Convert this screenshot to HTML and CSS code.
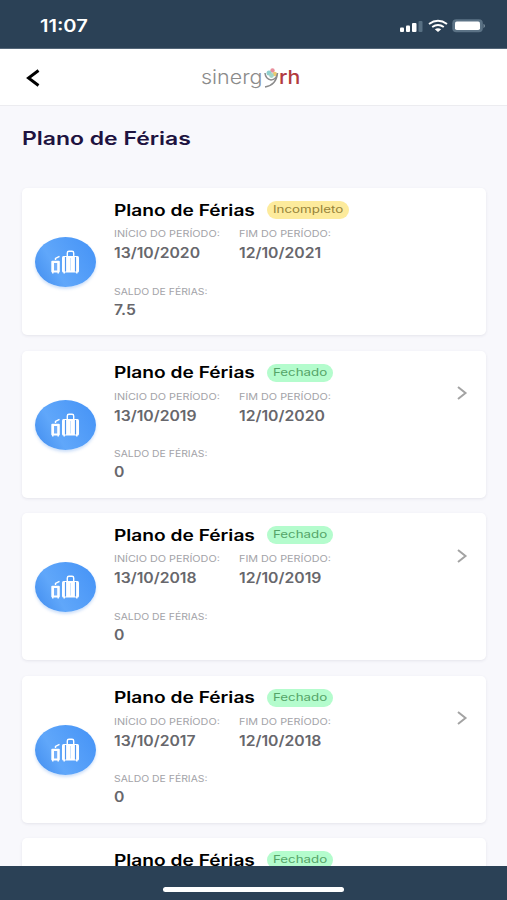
FILE: index.html
```
<!DOCTYPE html>
<html lang="pt-BR">
<head>
<meta charset="utf-8">
<meta name="viewport" content="width=device-width">
<title>Plano de Férias</title>
<link rel="stylesheet" href="styles.css">
</head>
<body>
<svg class="defs" aria-hidden="true">
  <symbol id="bags" viewBox="0 0 30 26">
    <rect x="1.300" y="11.800" width="8.500" height="11.700" rx="1" fill="#fff"/>
    <path d="M4 14h3.200v7.500H4z" fill="#75b0fa"/>
    <path d="M5.500 11V9.500L9.500 7.300" stroke="#fff" stroke-width="1.400" fill="none"/>
    <path d="M17.300 7V4Q17.300 2.300 19 2.300h3Q23.700 2.300 23.700 4V7" stroke="#fff" stroke-width="1.400" fill="none"/>
    <rect x="12" y="7" width="17" height="16.500" rx="1.500" fill="#fff"/>
    <path d="M15.500 8v14.500M25.500 8v14.500" stroke="#5298f3" stroke-width="1.200"/>
    <path d="M20.500 9v12.500" stroke="#b8d8ff" stroke-width=".7"/>
    <path d="M2.800 23v1.600M8.200 23v1.600M14.200 23v1.600M26.800 23v1.600" stroke="#fff" stroke-width="1.500"/>
  </symbol>
  <symbol id="next" viewBox="0 0 12 16"><path d="M2 2 9.500 8 2 14" fill="none" stroke="#a3a3a3" stroke-width="2"/></symbol>
</svg>
<div class="app">
  <div class="status">
    <span class="time"><span class="wide">11:07</span></span>
    <div class="signals">
      <svg width="24" height="14" viewBox="0 0 24 14"><g fill="#fff"><rect y="8.500" width="4" height="4.500" rx="1"/><rect x="6" y="6.500" width="4" height="6.500" rx="1"/><rect x="12" y="4" width="4.500" height="9" rx="1"/></g><rect x="18.500" y="2" width="4" height="11" rx="1" fill="#587083"/></svg>
      <svg width="20" height="14" viewBox="0 0 20 14"><g fill="none" stroke="#fff" stroke-width="2"><path d="M1 5Q10-1.500 19 5"/><path d="M4.200 8Q10 4 15.800 8"/></g><path d="M6.800 10.300Q10 8.200 13.200 10.300L10 13z" fill="#fff"/></svg>
      <svg width="34" height="14" viewBox="0 0 34 14"><rect x=".3" y=".3" width="30.500" height="13" rx="4" fill="#5c7386"/><rect x="3" y="2.600" width="25" height="8.400" rx="1.800" fill="#fff"/><path d="M31.500 4.800q3 2.200 0 4.400z" fill="#7d909f"/></svg>
    </div>
  </div>
  <header class="header">
    <svg class="back" width="14" height="18" viewBox="0 0 14 18"><path d="M12.500 1.500 2.500 9l10 7.500" fill="none" stroke="#000" stroke-width="2.900"/></svg>
    <div class="logo">
      <span class="logo-name"><span class="wide">sinerg</span></span>
      <svg class="logo-y" width="15" height="22" viewBox="0 0 15 22"><circle cx="8.500" cy="3.500" r="2.200" fill="#e98f9c"/><circle cx="5" cy="6" r="2.500" fill="#8fd0cf"/><circle cx="10.800" cy="7" r="2.200" fill="#eccb70"/><circle cx="7.500" cy="8.500" r="2.400" fill="#a5d4c6"/><path d="M1 6q.5 6 6 7 5.500-.5 6.500-7M13.500 6Q12.500 18 1 20" fill="none" stroke="#8b8b8b" stroke-width="1.500"/></svg>
      <span class="logo-rh"><span class="wide">rh</span></span>
    </div>
  </header>
  <main class="content">
    <h1><span class="wide">Plano de Férias</span></h1>
    <section class="card">
      <div class="avatar"><svg width="30" height="26"><use href="#bags"/></svg></div>
      <div class="info">
        <div class="head"><h2><span class="wide">Plano de Férias</span></h2><span class="badge open"><span class="wide">Incompleto</span></span></div>
        <dl>
          <div><dt><span class="wide">INÍCIO DO PERÍODO:</span></dt><dd><span class="wide">13/10/2020</span></dd></div>
          <div><dt><span class="wide">FIM DO PERÍODO:</span></dt><dd><span class="wide">12/10/2021</span></dd></div>
          <div class="balance"><dt><span class="wide">SALDO DE FÉRIAS:</span></dt><dd><span class="wide">7.5</span></dd></div>
        </dl>
      </div>
    </section>
    <section class="card">
      <div class="avatar"><svg width="30" height="26"><use href="#bags"/></svg></div>
      <div class="info">
        <div class="head"><h2><span class="wide">Plano de Férias</span></h2><span class="badge"><span class="wide">Fechado</span></span></div>
        <dl>
          <div><dt><span class="wide">INÍCIO DO PERÍODO:</span></dt><dd><span class="wide">13/10/2019</span></dd></div>
          <div><dt><span class="wide">FIM DO PERÍODO:</span></dt><dd><span class="wide">12/10/2020</span></dd></div>
          <div class="balance"><dt><span class="wide">SALDO DE FÉRIAS:</span></dt><dd><span class="wide">0</span></dd></div>
        </dl>
      </div>
      <svg class="next" width="12" height="16"><use href="#next"/></svg>
    </section>
    <section class="card">
      <div class="avatar"><svg width="30" height="26"><use href="#bags"/></svg></div>
      <div class="info">
        <div class="head"><h2><span class="wide">Plano de Férias</span></h2><span class="badge"><span class="wide">Fechado</span></span></div>
        <dl>
          <div><dt><span class="wide">INÍCIO DO PERÍODO:</span></dt><dd><span class="wide">13/10/2018</span></dd></div>
          <div><dt><span class="wide">FIM DO PERÍODO:</span></dt><dd><span class="wide">12/10/2019</span></dd></div>
          <div class="balance"><dt><span class="wide">SALDO DE FÉRIAS:</span></dt><dd><span class="wide">0</span></dd></div>
        </dl>
      </div>
      <svg class="next" width="12" height="16"><use href="#next"/></svg>
    </section>
    <section class="card">
      <div class="avatar"><svg width="30" height="26"><use href="#bags"/></svg></div>
      <div class="info">
        <div class="head"><h2><span class="wide">Plano de Férias</span></h2><span class="badge"><span class="wide">Fechado</span></span></div>
        <dl>
          <div><dt><span class="wide">INÍCIO DO PERÍODO:</span></dt><dd><span class="wide">13/10/2017</span></dd></div>
          <div><dt><span class="wide">FIM DO PERÍODO:</span></dt><dd><span class="wide">12/10/2018</span></dd></div>
          <div class="balance"><dt><span class="wide">SALDO DE FÉRIAS:</span></dt><dd><span class="wide">0</span></dd></div>
        </dl>
      </div>
      <svg class="next" width="12" height="16"><use href="#next"/></svg>
    </section>
    <section class="card">
      <div class="info">
        <div class="head"><h2><span class="wide">Plano de Férias</span></h2><span class="badge"><span class="wide">Fechado</span></span></div>
      </div>
    </section>
  </main>
  <footer class="bottom"><div class="home"></div></footer>
</div>
</body>
</html>
```
FILE: styles.css
```
* { box-sizing: border-box; }
body { margin: 0; font-family: Inter, "Open Sans", sans-serif; background: #f8f8fc; }
h1, h2, dl, dt, dd { margin: 0; }
.defs { display: none; }
.app { width: 507px; height: 900px; display: flex; flex-direction: column; overflow: hidden; }

/* Stretches a line of text horizontally from its left edge. */
.wide { display: inline-block; white-space: nowrap; transform: scaleX(var(--sx, 1)); transform-origin: 0 50%; }

.status { flex: none; height: 49px; background: #2b4156; border-bottom: 1px solid #546678; display: flex; justify-content: space-between; align-items: flex-start; padding: 18px 21px 0 40px; color: #fff; }
.time { --sx: 1.18; font-size: 17px; line-height: 17px; font-weight: 600; }
.signals { display: flex; gap: 4px; padding-top: 1px; }

.header { flex: none; height: 57px; background: #fff; border-bottom: 1px solid #ececf0; display: flex; align-items: flex-start; padding: 20px 0 0 26px; }
.logo { display: flex; margin: -3px 0 0 161px; font-size: 19px; line-height: 24px; }
.logo-name { --sx: 1.13; width: 63px; color: #8b8b8b; font-weight: 300; }
.logo-y { margin-top: 1px; }
.logo-rh { --sx: 1.12; color: #b23a40; font-weight: 500; }

.content { flex: 1; min-height: 0; overflow: hidden; padding: 20px 21px 0 21.500px; background: #f8f8fc; }
h1 { --sx: 1.275; color: #1e1340; font-size: 18px; line-height: 26px; font-weight: 600; margin-bottom: 36px; }
.card { height: 147px; margin-bottom: 15.500px; display: flex; background: #fff; border-radius: 5px; box-shadow: 0 1px 3px rgba(60, 60, 90, .1); }
.avatar { flex: none; width: 61px; height: 50px; margin: 49px 0 0 13px; border-radius: 50%; background: linear-gradient(60deg, #3f8bee, #60a7fa 35%, #4492f6); box-shadow: 0 2px 3px rgba(60, 130, 230, .25); display: flex; align-items: center; justify-content: center; }
.info { width: 330px; margin-left: 18.500px; padding-top: 12px; }
.info:first-child { margin-left: 92.500px; }
.head { display: flex; align-items: center; height: 20px; }
h2 { --sx: 1.235; width: 153px; font-size: 15.500px; line-height: 22px; padding-top: 1px; font-weight: 600; color: #000; }
.badge { --sx: 1.27; width: 66px; height: 18px; padding-left: 6px; border-radius: 9px; background: #b4fccd; color: #55a468; font-size: 10.500px; line-height: 17px; }
.badge.open { width: 82px; background: #fdeb9c; color: #96833a; }
dl { display: grid; grid-template-columns: 125px 125px; row-gap: 25.500px; padding-top: 8px; }
dt { --sx: 1.2; height: 12px; font-size: 9px; line-height: 12px; color: #a3a3a8; }
dd { --sx: 1.125; height: 20px; font-size: 14px; line-height: 25px; font-weight: 600; color: #67676c; }
.balance dt { --sx: 1.155; }
.balance dd { line-height: 24px; }
.next { flex: none; margin: 34.500px 0 0 12px; }

.bottom { flex: none; height: 34px; background: #2b4156; display: flex; justify-content: center; padding-top: 21px; }
.home { width: 181px; height: 5px; border-radius: 3px; background: #fff; }
```
